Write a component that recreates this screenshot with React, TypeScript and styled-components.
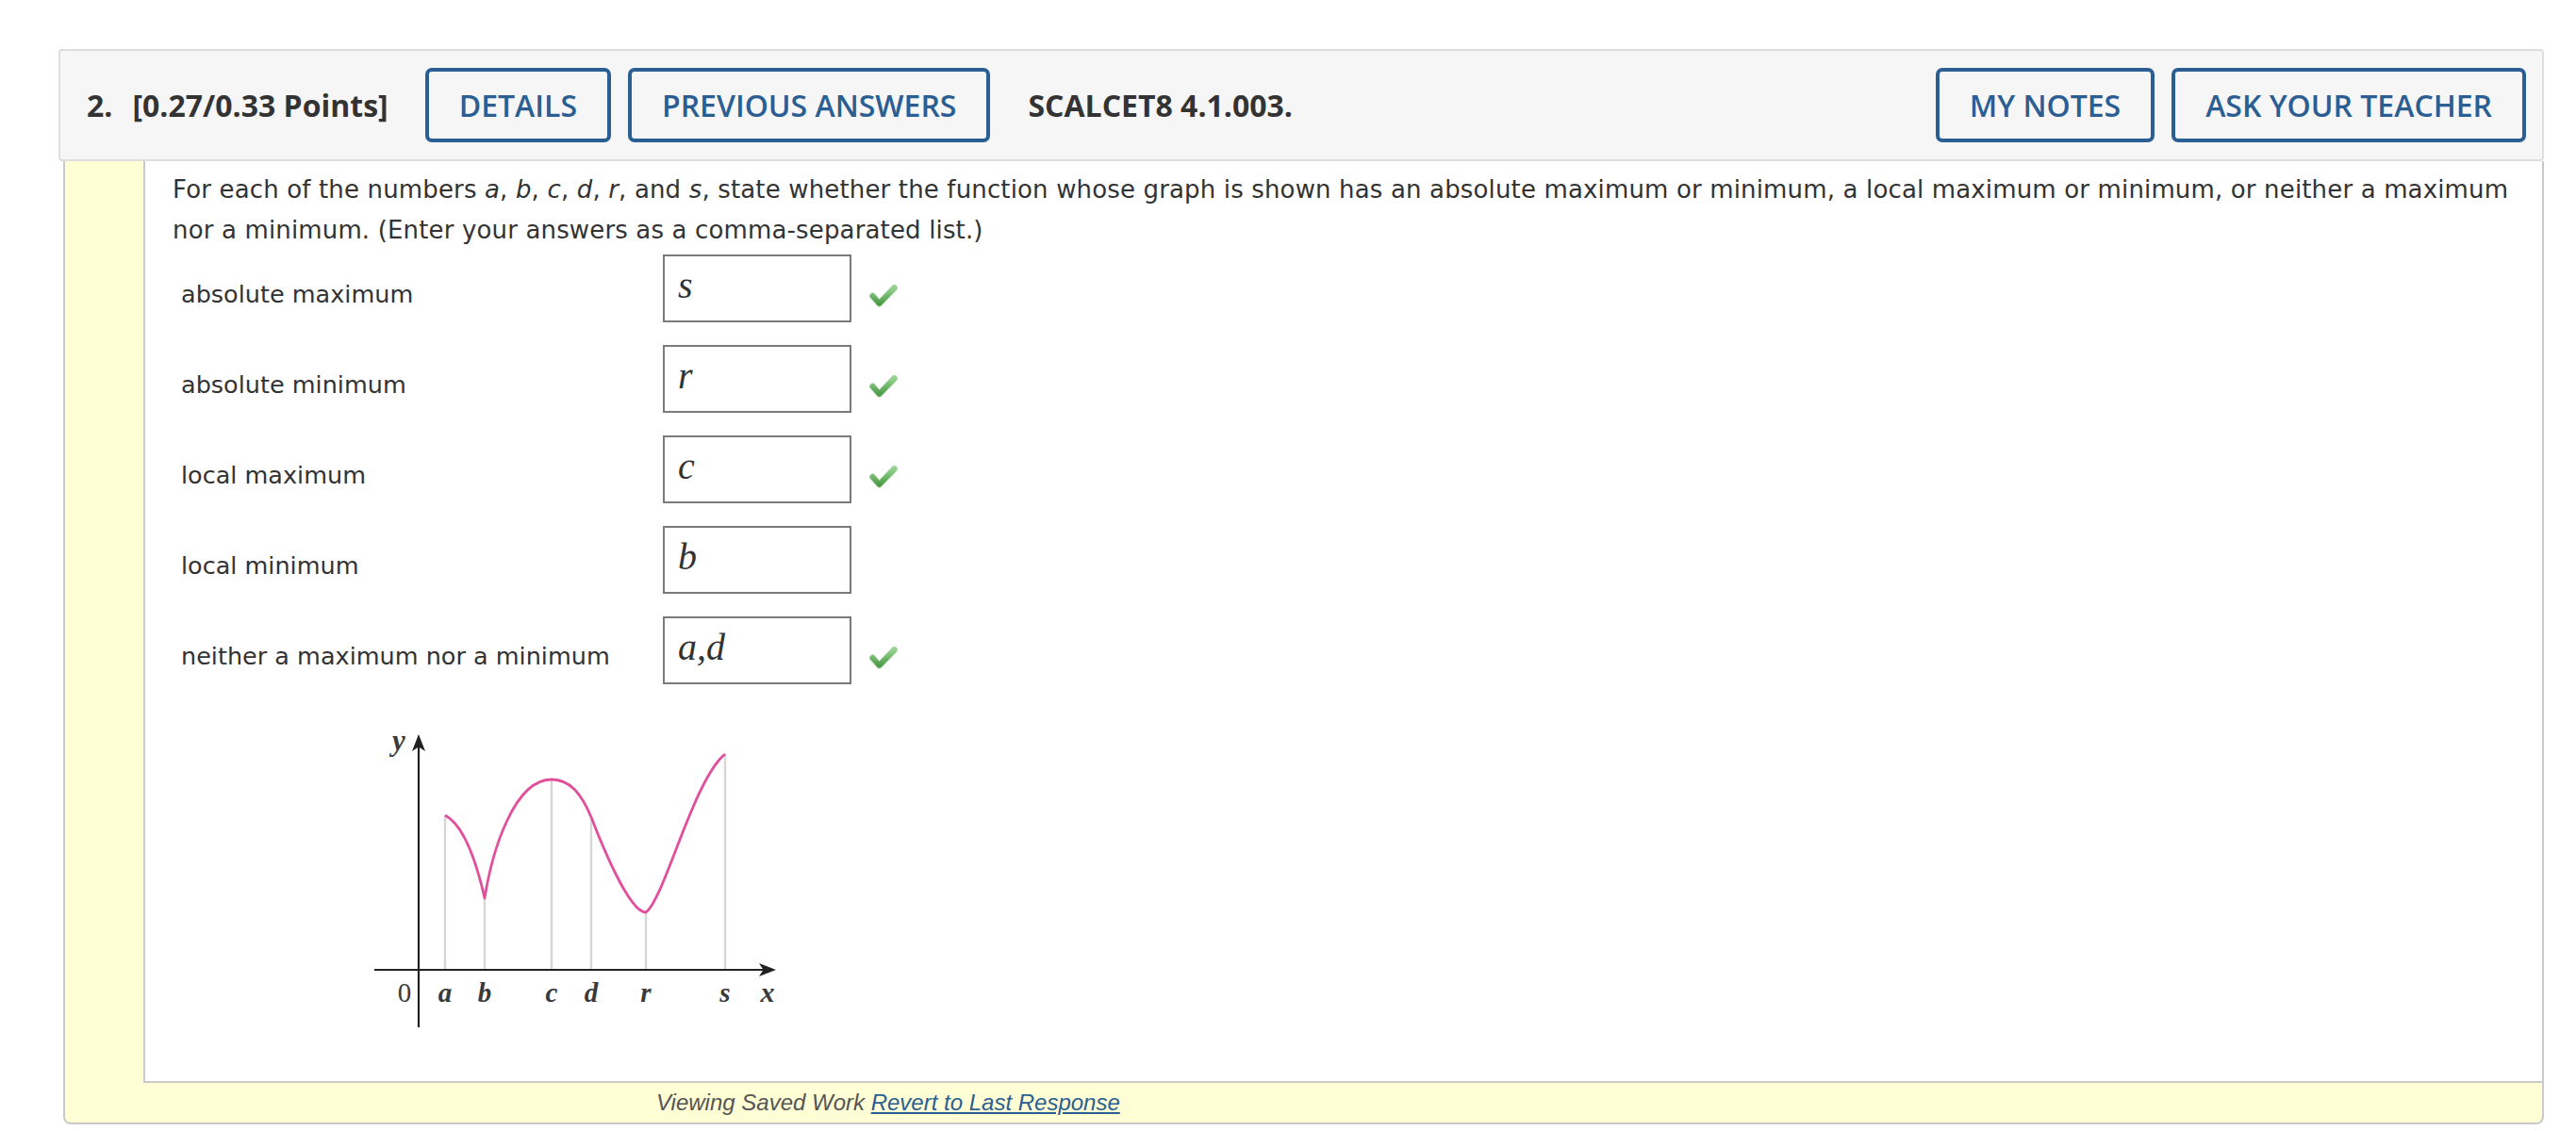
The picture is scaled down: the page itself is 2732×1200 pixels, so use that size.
import React from "react"
import styled, { createGlobalStyle } from "styled-components"

const GlobalStyle = createGlobalStyle`
  html, body {
    margin: 0;
    padding: 0;
    background: #ffffff;
  }
  * {
    box-sizing: border-box;
  }
`

type Answer = {
  label: string
  value: string
  correct: boolean
}

const answers: Answer[] = [
  { label: "absolute maximum", value: "s", correct: true },
  { label: "absolute minimum", value: "r", correct: true },
  { label: "local maximum", value: "c", correct: true },
  { label: "local minimum", value: "b", correct: false },
  { label: "neither a maximum nor a minimum", value: "a,d", correct: true },
]

const CheckMark: React.FC = () => (
  <svg width="30" height="25" viewBox="0 0 30 25">
    <defs>
      <linearGradient id="chk" x1="0" y1="0" x2="0" y2="1">
        <stop offset="0" stopColor="#93d48d" />
        <stop offset="1" stopColor="#4c9c48" />
      </linearGradient>
    </defs>
    <path
      d="M3.5 13 L10.5 21 L26.5 4.5"
      fill="none"
      stroke="#3f8a3c"
      strokeWidth="7"
      strokeLinecap="round"
      strokeLinejoin="round"
      opacity="0.35"
    />
    <path
      d="M3.5 13 L10.5 21 L26.5 4.5"
      fill="none"
      stroke="url(#chk)"
      strokeWidth="5.5"
      strokeLinecap="round"
      strokeLinejoin="round"
    />
  </svg>
)

const Graph: React.FC = () => {
  const ticks = [
    { x: 87, top: 97, name: "a" },
    { x: 129, top: 185, name: "b" },
    { x: 200, top: 59, name: "c" },
    { x: 242, top: 99, name: "d" },
    { x: 300, top: 200, name: "r" },
    { x: 384, top: 32, name: "s" },
  ]
  return (
    <GraphSvg width="450" height="330" viewBox="0 0 450 330">
      {ticks.map((t) => (
        <line key={t.name} x1={t.x} y1={261} x2={t.x} y2={t.top} stroke="#d6d6d6" strokeWidth="2.4" />
      ))}
      <line x1="12" y1="261" x2="428" y2="261" stroke="#222" strokeWidth="2.2" />
      <polygon points="438,261 420,254 424.5,261 420,268" fill="#222" />
      <line x1="59" y1="322" x2="59" y2="22" stroke="#222" strokeWidth="2.2" />
      <polygon points="59,11 52,29 59,24.5 66,29" fill="#222" />
      <path
        d="M87 97 Q112 110 129 185 C137 135 160 59 200 59 C220 59 232 75 242 99 C252 125 282 200 300 200 C320 185 350 60 384 32"
        fill="none"
        stroke="#e0509c"
        strokeWidth="2.8"
        strokeLinejoin="round"
      />
      <GraphLabel x="38" y="28" textAnchor="middle" $size={31}>y</GraphLabel>
      <GraphNumber x="44" y="295" textAnchor="middle">0</GraphNumber>
      {ticks.map((t) => (
        <GraphLabel key={t.name} x={t.x} y="295" textAnchor="middle" $size={29}>
          {t.name}
        </GraphLabel>
      ))}
      <GraphLabel x="429" y="295" textAnchor="middle" $size={30}>x</GraphLabel>
    </GraphSvg>
  )
}

const App: React.FC = () => {
  return (
    <Page>
      <GlobalStyle />
      <Panel>
        <Header>
          <QuestionNumber>2.</QuestionNumber>
          <Points>[0.27/0.33 Points]</Points>
          <HeaderButton $gap={39}>Details</HeaderButton>
          <HeaderButton $gap={18}>Previous Answers</HeaderButton>
          <Reference>SCALCET8 4.1.003.</Reference>
          <Spacer />
          <HeaderButton $gap={0}>My Notes</HeaderButton>
          <HeaderButton $gap={18}>Ask Your Teacher</HeaderButton>
        </Header>

        <Body>
          <Content>
            <Prompt>
              For each of the numbers <em>a</em>, <em>b</em>, <em>c</em>, <em>d</em>, <em>r</em>, and <em>s</em>, state
              whether the function whose graph is shown has an absolute maximum or minimum, a local maximum or minimum,
              or neither a maximum nor a minimum. (Enter your answers as a comma-separated list.)
            </Prompt>

            <AnswerList>
              {answers.map((a) => (
                <AnswerRow key={a.label}>
                  <AnswerLabel>{a.label}</AnswerLabel>
                  <AnswerBox>{a.value}</AnswerBox>
                  <CheckSlot>{a.correct && <CheckMark />}</CheckSlot>
                </AnswerRow>
              ))}
            </AnswerList>

            <Graph />
          </Content>

          <Footer>
            Viewing Saved Work <FooterLink href="#">Revert to Last Response</FooterLink>
          </Footer>
        </Body>
      </Panel>
    </Page>
  )
}

const Page = styled.div`
  padding: 52px 34px 0 62px;
`

const Panel = styled.div`
  width: 100%;
`

const Header = styled.div`
  height: 119px;
  display: flex;
  align-items: center;
  padding: 0 17px 0 28px;
  background: #f6f6f6;
  border: 2px solid #dedede;
  border-radius: 4px;
  font-family: "Open Sans", "Liberation Sans", sans-serif;
`

const QuestionNumber = styled.span`
  font-size: 32px;
  font-weight: 700;
  color: #333333;
`

const Points = styled.span`
  margin-left: 21px;
  font-size: 32px;
  font-weight: 700;
  color: #333333;
`

const HeaderButton = styled.button<{ $gap: number }>`
  margin-left: ${(p) => p.$gap}px;
  height: 79px;
  padding: 0 32px;
  background: transparent;
  border: 4px solid #2b5e92;
  border-radius: 7px;
  font-family: "Open Sans", "Liberation Sans", sans-serif;
  font-size: 32px;
  font-weight: 600;
  color: #2b5e92;
  text-transform: uppercase;
  white-space: nowrap;
`

const Reference = styled.span`
  margin-left: 40px;
  font-size: 32px;
  font-weight: 700;
  color: #333333;
`

const Spacer = styled.div`
  flex: 1;
`

const Body = styled.div`
  margin-left: 5px;
  background: #fffed4;
  border: 2px solid #c9c9c9;
  border-top: none;
  border-radius: 0 0 8px 8px;
`

const Content = styled.div`
  margin-left: 83px;
  padding: 9px 10px 49px 29px;
  background: #ffffff;
  border-left: 2px solid #c9c9c9;
  border-bottom: 2px solid #c9c9c9;
`

const Prompt = styled.p`
  margin: 0;
  font-family: "DejaVu Sans", Verdana, sans-serif;
  font-size: 26px;
  letter-spacing: 0.15px;
  line-height: 43px;
  color: #333333;

  em {
    font-style: italic;
  }
`

const AnswerList = styled.div`
  margin-top: 4px;
  padding-left: 9px;
  display: flex;
  flex-direction: column;
  gap: 24px;
`

const AnswerRow = styled.div`
  height: 72px;
  display: flex;
  align-items: center;
`

const AnswerLabel = styled.span`
  width: 511px;
  padding-top: 12px;
  font-family: "DejaVu Sans", Verdana, sans-serif;
  font-size: 25.5px;
  line-height: 29px;
  color: #333333;
`

const AnswerBox = styled.div`
  width: 200px;
  height: 72px;
  padding-left: 14px;
  border: 2px solid #7a7a7a;
  background: #ffffff;
  font-family: "Liberation Serif", "Times New Roman", serif;
  font-style: italic;
  font-size: 40px;
  line-height: 62px;
  color: #333333;
`

const CheckSlot = styled.div`
  margin-left: 19px;
  padding-top: 14px;
  width: 30px;
  height: 39px;
`

const GraphSvg = styled.svg`
  display: block;
  margin-top: 42px;
  margin-left: 202px;
  overflow: visible;
`

const GraphLabel = styled.text<{ $size: number }>`
  font-family: "Liberation Serif", "Times New Roman", serif;
  font-style: italic;
  font-weight: 700;
  font-size: ${(p) => p.$size}px;
  fill: #3a3a3a;
`

const GraphNumber = styled.text`
  font-family: "Liberation Serif", "Times New Roman", serif;
  font-size: 29px;
  fill: #3a3a3a;
`

const Footer = styled.div`
  height: 42px;
  padding-left: 627px;
  font-family: "Liberation Sans", Arial, sans-serif;
  font-style: italic;
  font-size: 24px;
  line-height: 42px;
  color: #555555;
`

const FooterLink = styled.a`
  color: #2b5e92;
  text-decoration: underline;
`

export default App
